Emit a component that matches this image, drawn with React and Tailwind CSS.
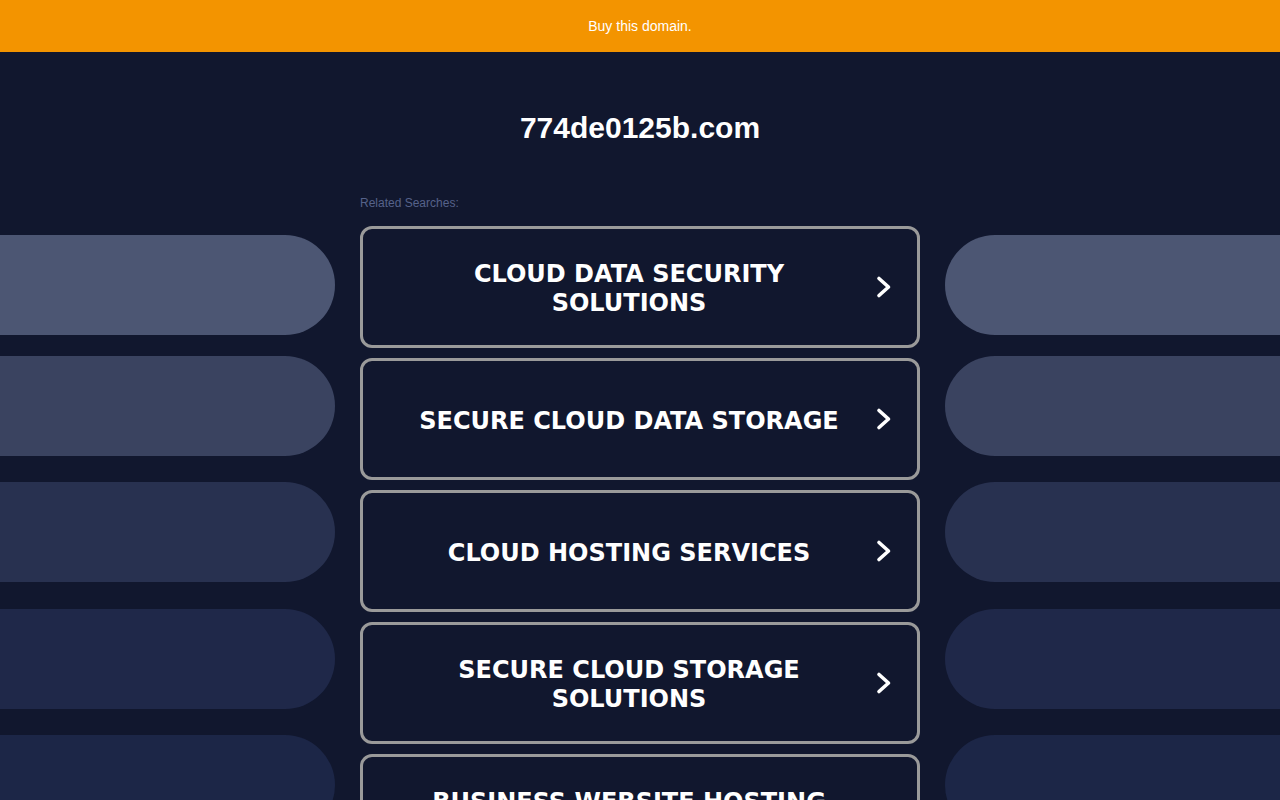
const searches = [
  "CLOUD DATA SECURITY SOLUTIONS",
  "SECURE CLOUD DATA STORAGE",
  "CLOUD HOSTING SERVICES",
  "SECURE CLOUD STORAGE SOLUTIONS",
  "BUSINESS WEBSITE HOSTING SERVICES",
];

const pills = [
  "mt-[0px] bg-[#4c5673]",
  "mt-[21px] bg-[#3a4360]",
  "mt-[26px] bg-[#283150]",
  "mt-[27px] bg-[#1f2849]",
  "mt-[26px] bg-[#1c2647]",
];

const Chevron = () => (
  <svg width="18" height="24" viewBox="0 0 18 24" fill="none">
    <path d="M4 3.5 L13.5 12 L4 20.5" stroke="white" strokeWidth="3.6" strokeLinecap="round" strokeLinejoin="round" />
  </svg>
);

const SideColumn = ({ side }) => (
  <div className="flex flex-col pt-[183px]">
    {pills.map((cls, i) => (
      <div
        key={i}
        className={`${cls} h-[100px] ${side === "left" ? "rounded-r-[50px]" : "rounded-l-[50px]"}`}
      />
    ))}
  </div>
);

const App = () => {
  return (
    <div className="h-screen overflow-hidden bg-[#11172e] font-['Liberation_Sans',Arial,sans-serif]">
      <div className="h-[52px] bg-[#f39400] flex items-center justify-center text-white text-[14px]">
        Buy this domain.
      </div>
      <div className="grid grid-cols-[335px_560px_335px] gap-x-[25px]">
        <SideColumn side="left" />
        <div className="flex flex-col">
          <h1 className="mt-[61px] text-center text-white text-[30px] font-bold leading-[30px]">774de0125b.com</h1>
          <div className="mt-[53px] text-[12px] text-[#56628a] leading-[14px]">Related Searches:</div>
          <div className="mt-[16px] flex flex-col gap-[10px]">
            {searches.map((s) => (
              <a
                key={s}
                href="#"
                className="h-[122px] flex items-center border-[3px] border-[#9a9a9a] rounded-[12px] pl-[40px] pr-[24px]"
              >
                <span className="flex-1 pt-[4px] text-center text-white font-bold text-[24px] leading-[29px] font-['DejaVu_Sans',Verdana,sans-serif]">
                  {s}
                </span>
                <span className="ml-[20px] flex items-center">
                  <Chevron />
                </span>
              </a>
            ))}
          </div>
        </div>
        <SideColumn side="right" />
      </div>
    </div>
  );
};

export default App;
